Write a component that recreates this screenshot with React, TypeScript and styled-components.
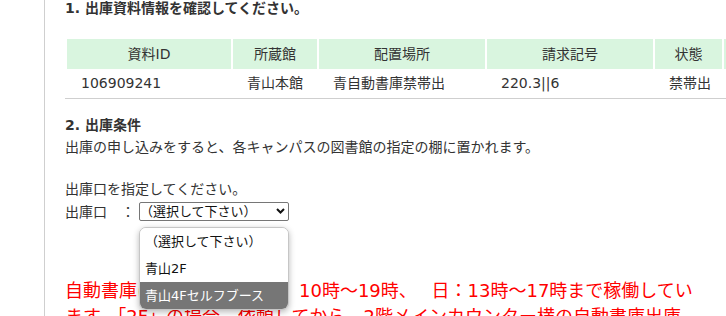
import React from 'react'
import styled, { createGlobalStyle } from 'styled-components'

const GlobalStyle = createGlobalStyle`
  html, body {
    margin: 0;
    padding: 0;
    background: #fff;
    overflow: hidden;
  }
  body {
    font-family: "DejaVu Sans", "Noto Sans CJK JP", sans-serif;
    font-size: 14px;
    color: #333;
  }
`

const Page = styled.div`
  display: flex;
  padding-left: 44px;
  min-height: 316px;
`

const Main = styled.div`
  flex: 1;
  border-left: 1px solid #cfcfcf;
  padding-left: 20px;
`

const SectionTitle = styled.h2<{ $top?: number }>`
  margin: ${(p) => p.$top ?? 0}px 0 0;
  font-size: 14px;
  font-weight: bold;
  line-height: 17px;
  color: #333;
`

const Table = styled.table`
  margin-top: 22px;
  border-collapse: separate;
  border-spacing: 0;
  table-layout: fixed;
  width: 737px;
`

const Th = styled.th<{ $w: number }>`
  width: ${(p) => p.$w}px;
  height: 30px;
  padding: 0;
  background: #d9f5df;
  background-clip: padding-box;
  border-left: 2px solid #fff;
  font-weight: normal;
  text-align: center;
  line-height: 30px;
  white-space: nowrap;
`

const Td = styled.td<{ $align?: string }>`
  height: 29px;
  padding: 0 16px;
  border-bottom: 1px solid #cfcfcf;
  text-align: ${(p) => p.$align ?? 'left'};
  line-height: 29px;
  white-space: nowrap;
`

const Text = styled.p<{ $top?: number }>`
  margin: ${(p) => p.$top ?? 0}px 0 0;
  line-height: 22px;
`

const FieldRow = styled.div`
  display: flex;
  align-items: center;
  height: 22px;
`

const Label = styled.span`
  width: 74px;
  white-space: pre;
`

const SelectWrap = styled.div`
  position: relative;
  font-size: 13px;
`

const SelectBox = styled.div`
  box-sizing: border-box;
  display: flex;
  align-items: center;
  justify-content: space-between;
  width: 150px;
  height: 19px;
  padding: 0 3px 0 0;
  border: 1px solid #767676;
  border-radius: 2px;
  background: #fff;
  color: #111;
  line-height: 17px;
`

const Popup = styled.div`
  position: absolute;
  top: 25px;
  left: 0;
  z-index: 2;
  box-sizing: border-box;
  width: 150px;
  border: 1px solid #c6c6c6;
  border-radius: 7px;
  background: #fff;
  box-shadow: 0 2px 6px rgba(0, 0, 0, 0.28);
  overflow: hidden;
`

const Option = styled.div<{ $active?: boolean }>`
  height: 27px;
  padding-left: 5px;
  line-height: 27px;
  white-space: nowrap;
  background: ${(p) => (p.$active ? '#767676' : '#fff')};
  color: ${(p) => (p.$active ? '#fff' : '#111')};
`

const Notice = styled.p`
  margin: 56px 0 0;
  width: 632px;
  font-size: 18px;
  line-height: 26px;
  color: #ff0000;
`

const Chevron = () => (
  <svg width="9" height="6" viewBox="0 0 9 6">
    <path d="M1 1l3.5 3.5L8 1" fill="none" stroke="#111" strokeWidth="2" />
  </svg>
)

const options = ['（選択して下さい）', '青山2F', '青山4Fセルフブース']

export default function App() {
  return (
    <Page>
      <GlobalStyle />
      <Main>
        <SectionTitle>1. 出庫資料情報を確認してください。</SectionTitle>
        <Table>
          <thead>
            <tr>
              <Th $w={164}>資料ID</Th>
              <Th $w={84}>所蔵館</Th>
              <Th $w={166}>配置場所</Th>
              <Th $w={166}>請求記号</Th>
              <Th $w={67}>状態</Th>
              <Th $w={78}></Th>
            </tr>
          </thead>
          <tbody>
            <tr>
              <Td>106909241</Td>
              <Td $align="center">青山本館</Td>
              <Td>青自動書庫禁帯出</Td>
              <Td>220.3||6</Td>
              <Td>禁帯出</Td>
              <Td></Td>
            </tr>
          </tbody>
        </Table>

        <SectionTitle $top={18}>2. 出庫条件</SectionTitle>
        <Text $top={2}>出庫の申し込みをすると、各キャンパスの図書館の指定の棚に置かれます。</Text>
        <Text $top={20}>出庫口を指定してください。</Text>
        <FieldRow>
          <Label>出庫口　：</Label>
          <SelectWrap>
            <SelectBox>
              <span>（選択して下さい）</span>
              <Chevron />
            </SelectBox>
            <Popup>
              {options.map((o, i) => (
                <Option key={o} $active={i === 2}>{o}</Option>
              ))}
            </Popup>
          </SelectWrap>
        </FieldRow>

        <Notice>
          自動書庫は、月曜～土曜：　10時～19時、　 日：13時～17時まで稼働しています。「2F」の場合、依頼してから、2階メインカウンター横の自動書庫出庫口で受け取ってください。
        </Notice>
      </Main>
    </Page>
  )
}
